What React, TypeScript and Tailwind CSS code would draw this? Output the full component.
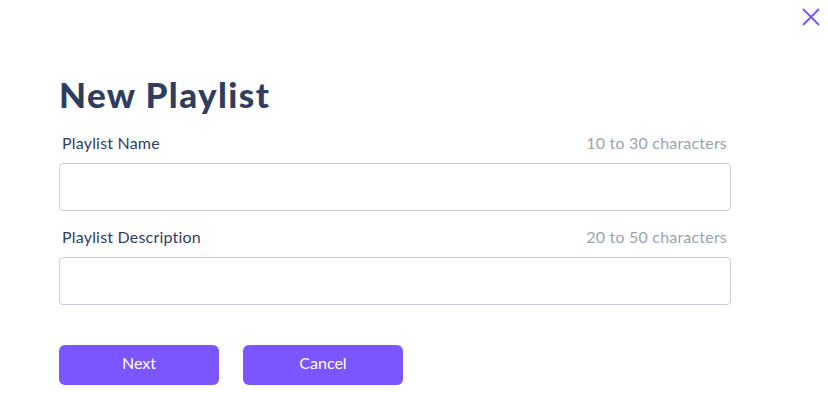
import { X } from "lucide-react";

const fields = [
  { label: "Playlist Name", hint: "10 to 30 characters" },
  { label: "Playlist Description", hint: "20 to 50 characters" },
];

export default function App() {
  return (
    <div className="relative w-[828px] h-[393px] bg-white overflow-hidden" style={{ fontFamily: "Lato, 'Noto Sans', sans-serif" }}>
      {/* close */}
      <button className="absolute right-[2px] top-[2px] text-[#7b55ff]">
        <X size={30} strokeWidth={1.5} />
      </button>

      <div className="pl-[59px] pt-[72px] w-[731px]">
        <h1 className="text-[35px] leading-[44px] font-black text-[#2f3e5e] tracking-[1.4px]">New Playlist</h1>

        <div className="mt-[17px] flex flex-col gap-[16px]">
          {fields.map((f) => (
            <div key={f.label}>
              <div className="flex justify-between items-center pl-[3px] pr-[4px] h-[20px] text-[16px] tracking-[0.2px]">
                <span className="text-[#2f3e5e]">{f.label}</span>
                <span className="text-[#9ba3b0]">{f.hint}</span>
              </div>
              <input className="mt-[10px] block w-full h-[48px] rounded-[4px] border border-[#c9ccd6] outline-none px-3" />
            </div>
          ))}
        </div>

        <div className="mt-[40px] flex gap-[24px]">
          <button className="w-[160px] h-[40px] pb-[4px] rounded-[6px] bg-[#7b55ff] text-white text-[16px]">Next</button>
          <button className="w-[160px] h-[40px] pb-[4px] rounded-[6px] bg-[#7b55ff] text-white text-[16px]">Cancel</button>
        </div>
      </div>
    </div>
  );
}
